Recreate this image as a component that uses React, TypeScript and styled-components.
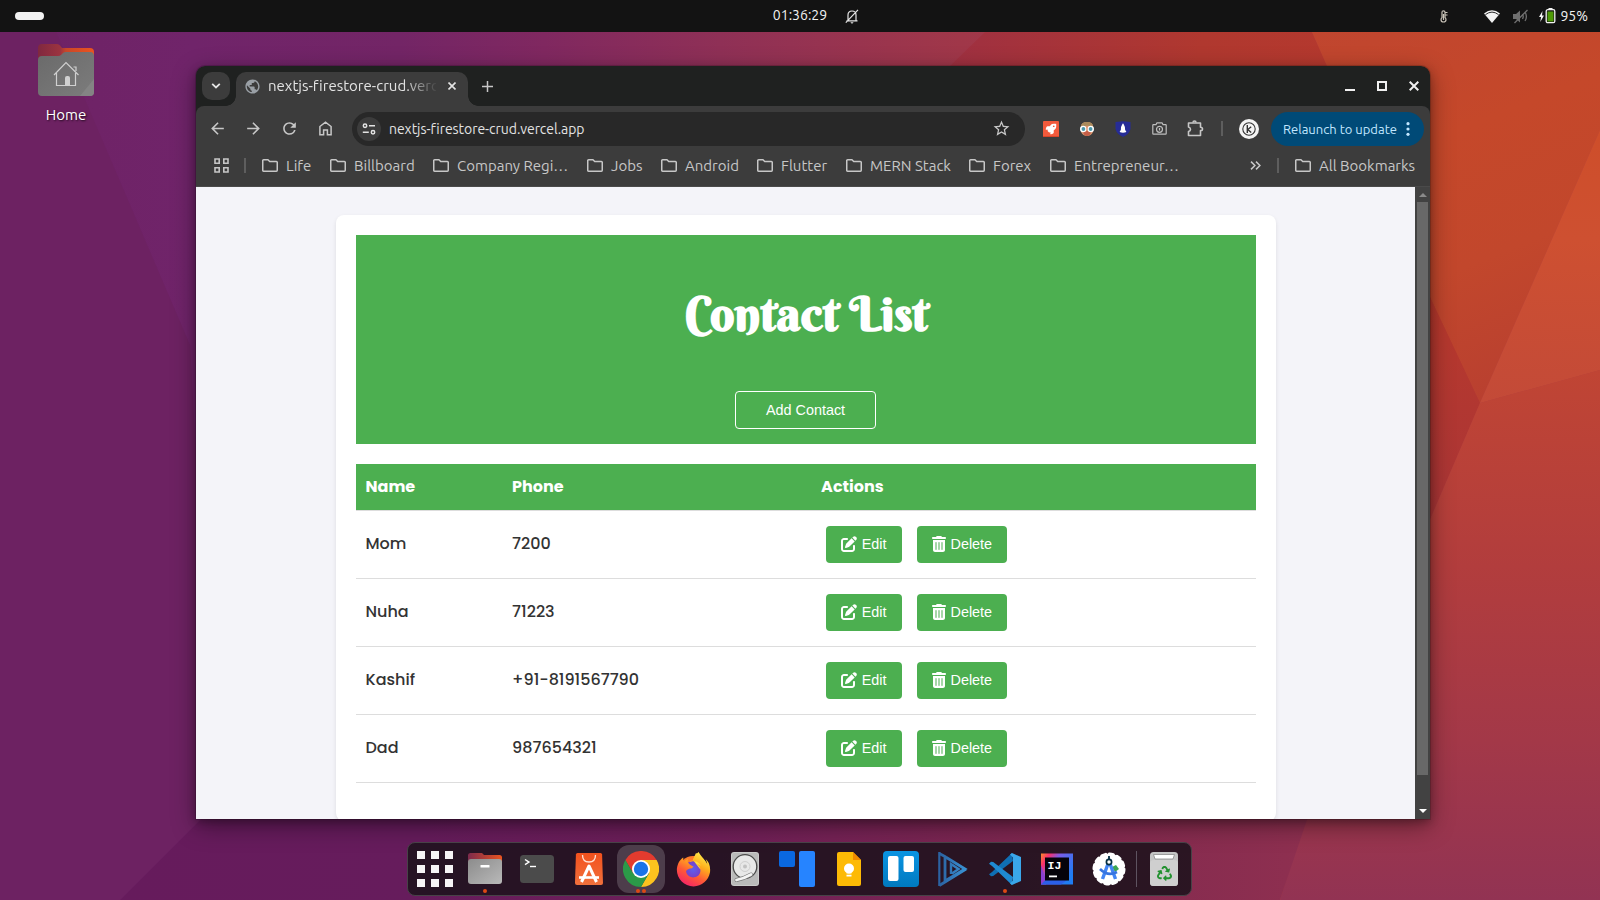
import React from 'react';
import styled, { createGlobalStyle, css } from 'styled-components';
import { FaPenToSquare, FaTrashCan } from 'react-icons/fa6';
import { FaFirefoxBrowser, FaRecycle, FaRocket } from 'react-icons/fa';
import { MdArrowBack, MdArrowForward, MdPublic, MdRefresh, MdStarBorder } from 'react-icons/md';

const GlobalStyle = createGlobalStyle`
  * { box-sizing: border-box; }
  body { margin: 0; overflow: hidden; }
  svg { display: block; flex: none; }
`;

const ui = '"Ubuntu", "Noto Sans", sans-serif';
const poppins = '"Poppins", "Inter", sans-serif';
const green = '#4caf50';

/* ---------- desktop ---------- */

const Desktop = styled.div`
  position: relative;
  display: flex;
  flex-direction: column;
  width: 1600px;
  height: 900px;
  overflow: hidden;
  background: #70246a;
  font-family: ${ui};
`;

const WallpaperSvg = styled.svg`
  position: absolute;
  inset: 0;
`;

const TopBar = styled.header`
  position: relative;
  display: grid;
  grid-template-columns: 1fr auto 1fr;
  align-items: center;
  height: 32px;
  padding: 0 12px 0 15px;
  background: #131313;
  color: #f2f2f2;
  font-size: 14px;
  line-height: 30px;
`;

const WorkspacePill = styled.div`
  width: 29px;
  height: 8px;
  border-radius: 4px;
  background: #f2f2f2;
`;

const Clock = styled.div`
  display: flex;
  align-items: center;
  gap: 18px;
  padding-left: 29px;
  height: 32px;
`;

const ClockTime = styled.span`
  padding-bottom: 2px;
`;

const StatusArea = styled.div`
  display: flex;
  align-items: center;
  justify-content: flex-end;
  height: 32px;
`;

const StatusIcon = styled.span<{ $after: number }>`
  margin-right: ${(p) => p.$after}px;
`;

const DesktopShortcut = styled.div`
  position: absolute;
  left: 26px;
  top: 43px;
  width: 80px;
  display: flex;
  flex-direction: column;
  align-items: center;
  gap: 8px;
  color: #fff;
  font-size: 15px;
  line-height: 20px;
  text-shadow: 1px 1px 2px rgba(0, 0, 0, 0.75);
`;

/* ---------- browser window ---------- */

const Window = styled.section`
  position: absolute;
  left: 196px;
  top: 66px;
  width: 1234px;
  height: 753px;
  display: flex;
  flex-direction: column;
  overflow: hidden;
  border-radius: 9px 9px 0 0;
  background: #1f2120;
`;

const WindowShadow = styled.div`
  position: absolute;
  left: 196px;
  top: 66px;
  width: 1234px;
  height: 753px;
  border-radius: 9px 9px 0 0;
  box-shadow: 0 0 0 1px rgba(0, 0, 0, 0.15), 0 3px 8px rgba(0, 0, 0, 0.25), 0 7px 24px rgba(0, 0, 0, 0.4);
`;

const TabStrip = styled.div`
  display: flex;
  align-items: flex-start;
  height: 40px;
  padding: 6px 11px 0 6px;
  color: #e3e3e3;
`;

const TabSearch = styled.div`
  display: grid;
  place-items: center;
  width: 28px;
  height: 28px;
  margin-right: 6px;
  border-radius: 10px;
  background: #3c3c3c;
`;

const Tab = styled.div`
  position: relative;
  display: flex;
  align-items: center;
  width: 232px;
  height: 34px;
  padding: 0 0 6px 8px;
  border-radius: 10px 10px 0 0;
  background: #3c3c3c;
  &::before,
  &::after {
    content: '';
    position: absolute;
    bottom: 0;
    width: 10px;
    height: 10px;
  }
  &::before {
    left: -10px;
    background: radial-gradient(circle at 0 0, transparent 9.5px, #3c3c3c 10px);
  }
  &::after {
    right: -10px;
    background: radial-gradient(circle at 100% 0, transparent 9.5px, #3c3c3c 10px);
  }
`;

const TabTitle = styled.span`
  width: 168px;
  margin: 0 12px 0 7px;
  overflow: hidden;
  white-space: nowrap;
  font-size: 15px;
  font-variant-ligatures: none;
  line-height: 24px;
  mask-image: linear-gradient(to right, #000 136px, transparent 170px);
`;

const NewTab = styled.div`
  display: grid;
  place-items: center;
  width: 20px;
  height: 28px;
  margin-left: 9.5px;
`;

const WindowControls = styled.div`
  display: flex;
  align-items: center;
  gap: 22px;
  height: 28px;
  margin-left: auto;
`;

const Toolbar = styled.div`
  display: flex;
  align-items: center;
  height: 44px;
  padding: 1px 6px 0 12px;
  border-radius: 8px 8px 0 0;
  background: #3c3c3c;
  color: #c7c7c7;
`;

const NavSlot = styled.div`
  display: grid;
  place-items: center;
  width: 36px;
  height: 34px;
`;

const NavGroup = styled.div`
  display: flex;
  margin: 0 8.500px 0 -8.500px;
`;

const Omnibox = styled.div`
  display: flex;
  align-items: center;
  width: 673px;
  height: 34px;
  padding: 0 14px 0 5px;
  border-radius: 17px;
  background: #282828;
  color: #e3e3e3;
  font-size: 14px;
`;

const SiteInfo = styled.div`
  display: grid;
  place-items: center;
  width: 24px;
  height: 24px;
  margin-right: 8px;
  border-radius: 50%;
  background: #3c3c3c;
`;

const Url = styled.span`
  flex: 1;
  letter-spacing: -0.05px;
  line-height: 20px;
`;

const Extensions = styled.div`
  display: flex;
  flex: 1;
  align-items: center;
  margin-left: 8px;
`;

const Divider = styled.div<{ $h: number }>`
  width: 2px;
  height: ${(p) => p.$h}px;
  background: #5e5e5e;
`;

const Avatar = styled.div`
  display: grid;
  place-items: center;
  width: 20px;
  height: 20px;
  margin: 0 12px 0 auto;
  border-radius: 50%;
  background: #f4f4f4;
`;

const RelaunchButton = styled.div`
  display: flex;
  align-items: center;
  justify-content: space-between;
  width: 153px;
  height: 34px;
  padding: 0 14px 0 12px;
  border-radius: 17px;
  background: #004a77;
  color: #c2e7ff;
  font-size: 13px;
`;

const BookmarksBar = styled.div`
  display: flex;
  align-items: center;
  height: 37px;
  padding: 0 15px 5px 18px;
  border-bottom: 1px solid #4a4a4a;
  background: #3c3c3c;
  color: #c7c7c7;
  font-size: 15px;
  line-height: 20px;
`;

const Bookmark = styled.div<{ $w: number }>`
  display: flex;
  align-items: center;
  gap: 8px;
  width: ${(p) => p.$w}px;
  white-space: nowrap;
`;

const BookmarkList = styled.div`
  display: flex;
  flex: 1;
  margin-left: 16px;
`;

const BookmarksEnd = styled.div`
  display: flex;
  align-items: center;
  gap: 16px;
`;

const Spacer = styled.div<{ $w: number }>`
  width: ${(p) => p.$w}px;
`;

const Viewport = styled.div`
  display: flex;
  flex: 1;
  min-height: 0;
`;

const Page = styled.main`
  display: flex;
  justify-content: center;
  align-items: flex-start;
  width: 1219px;
  height: 100%;
  padding-top: 28px;
  overflow: hidden;
  background: #f4f4f9;
  font-family: ${poppins};
  color: #333;
`;

const Scrollbar = styled.div`
  display: flex;
  flex-direction: column;
  align-items: center;
  justify-content: space-between;
  width: 15px;
  padding: 6px 0;
  background: #424242;
`;

const ScrollThumb = styled.div`
  width: 11px;
  height: 573px;
  margin: 5px 0 auto;
  background: #686868;
`;

/* ---------- contact page ---------- */

const Card = styled.div`
  width: 940px;
  height: 606px;
  padding: 20px;
  border-radius: 8px;
  background: #fff;
  box-shadow: 0 2px 4px rgba(0, 0, 0, 0.1);
`;

const Hero = styled.div`
  display: flex;
  flex-direction: column;
  align-items: center;
  justify-content: space-between;
  height: 209px;
  margin-bottom: 20px;
  padding: 49px 0 15px;
  background: ${green};
  color: #fff;
`;

const Title = styled.h1`
  margin: 0;
  padding-left: 2px;
  font: 700 48px/60px 'Berkshire Swash', 'Liberation Serif', serif;
`;

const buttonBase = css`
  border-radius: 4px;
  background: ${green};
  color: #fff;
  font: 400 14.4px/17px 'Liberation Sans', Arial, sans-serif;
`;

const AddButton = styled.button`
  ${buttonBase}
  width: 141px;
  height: 38px;
  padding: 0;
  border: 1px solid #fff;
`;

const ActionButton = styled.button<{ $icon: number }>`
  ${buttonBase}
  display: inline-flex;
  align-items: center;
  gap: 5px;
  height: 37px;
  padding: 0 15px;
  border: 0;
  svg {
    width: ${(p) => p.$icon}px;
    height: 16px;
  }
`;

const Actions = styled.div`
  display: flex;
  gap: 15px;
  padding: 1px 0 0 4.600px;
`;

const Table = styled.table`
  width: 100%;
  table-layout: fixed;
  border-collapse: separate;
  border-spacing: 0;
  font-size: 16px;
  line-height: 24px;
`;

const HeadCell = styled.th<{ $w?: number }>`
  width: ${(p) => (p.$w ? p.$w + 'px' : 'auto')};
  height: 47px;
  padding: 0 10px;
  border-bottom: 1px solid #ddd;
  background: ${green};
  color: #fff;
  font-weight: 700;
  text-align: left;
`;

const Cell = styled.td`
  height: 68px;
  padding: 0 10px 2px;
  border-bottom: 1px solid #ddd;
  font-weight: 500;
`;

/* ---------- dock ---------- */

const Dock = styled.nav`
  position: absolute;
  left: 407px;
  top: 842px;
  display: flex;
  align-items: center;
  width: 785px;
  height: 54px;
  border: 1px solid #474247;
  border-radius: 8px;
  background: rgba(30, 18, 28, 0.88);
`;

const DockSlot = styled.div<{ $w?: number; $nudge?: number }>`
  position: relative;
  display: grid;
  flex: none;
  place-items: center;
  width: ${(p) => p.$w ?? 52}px;
  height: 52px;
  padding-left: ${(p) => p.$nudge ?? 0}px;
`;

const ActiveTile = styled.div`
  display: grid;
  place-items: center;
  width: 48px;
  height: 48px;
  border-radius: 12px;
  background: rgba(255, 255, 255, 0.18);
`;

const RunningDots = styled.div`
  position: absolute;
  left: 0;
  right: 0;
  bottom: 2px;
  display: flex;
  justify-content: center;
  gap: 2px;
`;

const Dot = styled.i`
  width: 4px;
  height: 4px;
  border-radius: 50%;
  background: #dd4814;
`;

const DockDivider = styled.div`
  flex: none;
  width: 1px;
  height: 36px;
  margin-left: 1px;
  background: #5e5360;
`;

const AppGrid = styled.div`
  display: grid;
  grid-template-columns: repeat(3, 8px);
  grid-auto-rows: 8px;
  gap: 6px;
`;

const GridSquare = styled.i`
  background: #f6f4f6;
`;

const FirefoxBox = styled.div`
  display: grid;
  place-items: center;
  width: 36px;
  height: 36px;
  & > * { grid-area: 1 / 1; }
  & > svg:last-child path { fill: url(#ffBody); }
`;

const TrashBox = styled.div`
  display: grid;
  place-items: center;
  color: #22912f;
  & > * { grid-area: 1 / 1; }
  & > svg:last-child { margin-top: 8px; }
`;

/* ---------- drawings ---------- */

const Wallpaper = () => (
  <WallpaperSvg width="1600" height="900" viewBox="0 0 1600 900">
    <defs>
      <linearGradient id="wTop" gradientUnits="userSpaceOnUse" x1="0" y1="0" x2="1600" y2="0">
        <stop offset="0" stopColor="#6e2264" />
        <stop offset="0.12" stopColor="#70246a" />
        <stop offset="0.25" stopColor="#732566" />
        <stop offset="0.34" stopColor="#802860" />
        <stop offset="0.45" stopColor="#8f3056" />
        <stop offset="0.6" stopColor="#a03749" />
        <stop offset="1" stopColor="#b5403a" />
      </linearGradient>
      <linearGradient id="wRed" gradientUnits="userSpaceOnUse" x1="960" y1="0" x2="1440" y2="100">
        <stop offset="0" stopColor="#9f3041" />
        <stop offset="0.5" stopColor="#b0382f" />
        <stop offset="1" stopColor="#b8392d" />
      </linearGradient>
      <linearGradient id="wOrange" gradientUnits="userSpaceOnUse" x1="1320" y1="0" x2="1480" y2="400">
        <stop offset="0" stopColor="#bf4530" />
        <stop offset="0.4" stopColor="#c5482a" />
        <stop offset="0.7" stopColor="#c2472c" />
        <stop offset="1" stopColor="#b94030" />
      </linearGradient>
      <linearGradient id="wBright" x1="0" y1="0" x2="0" y2="1">
        <stop offset="0" stopColor="#ce4e2a" />
        <stop offset="0.4" stopColor="#ce5031" />
        <stop offset="1" stopColor="#c34a38" />
      </linearGradient>
      <linearGradient id="wDark" x1="0" y1="0" x2="0" y2="1">
        <stop offset="0" stopColor="#b9392b" />
        <stop offset="1" stopColor="#a93538" />
      </linearGradient>
      <linearGradient id="wLow" gradientUnits="userSpaceOnUse" x1="0" y1="370" x2="0" y2="900">
        <stop offset="0" stopColor="#c04534" />
        <stop offset="0.37" stopColor="#b23d3d" />
        <stop offset="0.7" stopColor="#a33848" />
        <stop offset="1" stopColor="#923353" />
      </linearGradient>
      <linearGradient id="wBottom" gradientUnits="userSpaceOnUse" x1="120" y1="0" x2="1320" y2="0">
        <stop offset="0" stopColor="#661b5c" />
        <stop offset="0.25" stopColor="#661c5c" />
        <stop offset="0.5" stopColor="#6f1f58" />
        <stop offset="0.8" stopColor="#82294f" />
        <stop offset="1" stopColor="#8f3050" />
      </linearGradient>
    </defs>
    <rect width="1600" height="900" fill="url(#wTop)" />
    <path d="M56 32L190 345L215 805L120 900H0V32Z" fill="#6d2262" />
    <path d="M950 66L985 32H1312L1480 403L1300 800H950Z" fill="url(#wRed)" />
    <path d="M1312 32H1600V130L1480 403L1430 297L1327 66Z" fill="url(#wOrange)" />
    <path d="M1600 130V370L1480 403Z" fill="url(#wBright)" />
    <path d="M1420 276L1480 403L1420 543Z" fill="url(#wDark)" />
    <path d="M1480 403L1600 370V900H1280L1315 790Z" fill="url(#wLow)" />
    <path d="M215 805H1312L1280 900H120Z" fill="url(#wBottom)" />
  </WallpaperSvg>
);

const FolderOutline = () => (
  <svg width="16" height="13" viewBox="0 0 16 13" fill="none" stroke="#c7c7c7" strokeWidth="1.5" strokeLinejoin="round">
    <path d="M.75 1.6q0-.85.85-.85H6L7.7 2.5h6.7q.85 0 .85.85v8q0 .9-.85.9H1.6q-.85 0-.85-.9z" />
  </svg>
);

const HomeFolder = () => (
  <svg width="56" height="54" viewBox="0 0 56 54">
    <defs>
      <linearGradient id="hfBack" x1="0" x2="1" y1="0" y2="0">
        <stop offset="0" stopColor="#80283f" />
        <stop offset="0.4" stopColor="#9c3440" />
        <stop offset="0.5" stopColor="#c94729" />
        <stop offset="1" stopColor="#ea5420" />
      </linearGradient>
      <linearGradient id="hfFront" x1="0" x2="1" y1="0" y2="1">
        <stop offset="0" stopColor="#6a6a6a" />
        <stop offset="1" stopColor="#7c7c7c" />
      </linearGradient>
    </defs>
    <path d="M0 5q0-4 4-4h15q2 0 3 1.500l2 2.500h28q4 0 4 4v20H0z" fill="url(#hfBack)" />
    <path d="M0 17q0-4 4-4h16q2 0 3-1l2-2q1-1 3-1h24q4 0 4 4v36q0 4-4 4H4q-4 0-4-4z" fill="url(#hfFront)" />
    <path d="M42 53L56 36v13q0 4-4 4z" fill="#848484" />
    <g fill="none" stroke="#d0d0d0" strokeWidth="1.200">
      <path d="M16 32L28 19.500 40.500 32M18.500 30v12.500h19V30M35.500 24h2.500v4" />
    </g>
    <path d="M27 43V35q0-2 2-2h1q2 0 2 2v8z" fill="#d0d0d0" />
  </svg>
);

const FilesIcon = () => (
  <svg width="34" height="34" viewBox="0 0 34 34">
    <defs>
      <linearGradient id="fBack" x1="0" x2="1">
        <stop offset="0" stopColor="#7c2a4c" />
        <stop offset="1" stopColor="#ea5420" />
      </linearGradient>
      <linearGradient id="fFront" x1="0" x2="1" y1="0" y2="1">
        <stop offset="0" stopColor="#8c8c8c" />
        <stop offset="1" stopColor="#b9b9b9" />
      </linearGradient>
    </defs>
    <path d="M0 3.500Q0 1 2.500 1H14l2 2h15.500Q34 3 34 5.500V20H0z" fill="url(#fBack)" />
    <rect y="7" width="34" height="25" rx="3" fill="url(#fFront)" />
    <rect x="12.500" y="13" width="9" height="2.500" rx=".6" fill="#fff" />
  </svg>
);

const TerminalIcon = () => (
  <svg width="34" height="30" viewBox="0 0 34 30">
    <rect y="1" width="34" height="28" rx="3.500" fill="#4b4b4b" />
    <path d="M5 5.500l4 2.600-4 2.600" fill="none" stroke="#fff" strokeWidth="1.400" />
    <path d="M10 12.500h6" stroke="#fff" strokeWidth="1.400" />
  </svg>
);

const AppCenterIcon = () => (
  <svg width="28" height="34" viewBox="0 0 28 34">
    <defs>
      <linearGradient id="acBag" x1="0" x2="0" y1="0" y2="1">
        <stop offset="0" stopColor="#f4511d" />
        <stop offset="1" stopColor="#f0703c" />
      </linearGradient>
    </defs>
    <path d="M2.500 1h23q1.500 0 1.600 1.500L28 31q0 2-2 2H2q-2 0-2-2L.9 2.500Q1 1 2.500 1z" fill="url(#acBag)" />
    <path d="M7.500 3q0 7 6.500 7t6.500-7" fill="none" stroke="#ffe2d6" strokeWidth="1.300" />
    <path d="M6.500 30L14 14l7.500 16" fill="none" stroke="#fff" strokeWidth="3" strokeLinejoin="round" />
    <path d="M4 25.500h20" stroke="#fff" strokeWidth="2.600" />
  </svg>
);

const ChromeIcon = () => (
  <svg width="36" height="36" viewBox="0 0 48 48">
    <path d="M24 12H44.800A24 24 0 0 0 3.200 12L13.600 30z" fill="#e33b2e" />
    <path d="M24 12H44.800A24 24 0 0 1 24 48L34.400 30z" fill="#fcc31e" />
    <path d="M13.600 30L3.200 12A24 24 0 0 0 24 48L34.400 30z" fill="#2b9a48" />
    <circle cx="24" cy="24" r="12" fill="#fff" />
    <circle cx="24" cy="24" r="9.600" fill="#1a73e8" />
  </svg>
);

const FirefoxIcon = () => (
  <FirefoxBox>
    <svg width="36" height="36" viewBox="0 0 36 36">
      <defs>
        <linearGradient id="ffBody" x1="0.8" x2="0.25" y1="0" y2="1">
          <stop offset="0" stopColor="#fff44f" />
          <stop offset="0.35" stopColor="#ffae1c" />
          <stop offset="0.65" stopColor="#ff5a36" />
          <stop offset="1" stopColor="#f31f6b" />
        </linearGradient>
        <radialGradient id="ffGlobe">
          <stop offset="0" stopColor="#5b5ff0" />
          <stop offset="1" stopColor="#7a3fc4" />
        </radialGradient>
      </defs>
      <circle cx="18" cy="19" r="14" fill="#ff7a2a" />
      <circle cx="18" cy="18.500" r="8.500" fill="url(#ffGlobe)" />
      <path d="M21 2q9 5 12 14l-8 2-7-9z" fill="#ffdc3e" />
    </svg>
    <FaFirefoxBrowser size={35} />
  </FirefoxBox>
);

const DisksIcon = () => (
  <svg width="28" height="34" viewBox="0 0 28 34">
    <rect width="28" height="34" rx="3" fill="#cacaca" />
    <rect x="1" y="1" width="26" height="32" rx="2" fill="#bababa" />
    <circle cx="14" cy="14.500" r="11.800" fill="#e8e8e8" stroke="#4a4a4a" strokeWidth="1.300" />
    <circle cx="14" cy="14.500" r="5" fill="none" stroke="#cfcfcf" />
    <circle cx="14" cy="14.500" r="2" fill="#c2c2c2" />
    <path d="M5.500 28Q13 26.500 20 22.500" fill="none" stroke="#777" strokeWidth="4" strokeLinecap="round" />
    <path d="M5.500 28Q13 26.500 20 22.500" fill="none" stroke="#f4f4f4" strokeWidth="2.800" strokeLinecap="round" />
  </svg>
);

const BlocksIcon = () => (
  <svg width="36" height="36" viewBox="0 0 36 36">
    <rect width="16" height="16" rx="2" fill="#0a68e0" />
    <rect x="20" width="16" height="36" rx="2" fill="#2684ff" />
  </svg>
);

const KeepIcon = () => (
  <svg width="24" height="34" viewBox="0 0 24 34">
    <path d="M2 0h14l8 8v24q0 2-2 2H2q-2 0-2-2V2Q0 0 2 0z" fill="#fdba05" />
    <path d="M16 0l8 8h-8z" fill="#f08a00" />
    <circle cx="12" cy="16.500" r="5" fill="#fff" />
    <rect x="9.500" y="18" width="5" height="3.500" fill="#fff" />
    <rect x="9.500" y="22.700" width="5" height="1.800" fill="#fff" />
  </svg>
);

const TrelloIcon = () => (
  <svg width="36" height="36" viewBox="0 0 36 36">
    <defs>
      <linearGradient id="tr" x1="0" x2="0" y1="0" y2="1">
        <stop offset="0" stopColor="#0a94e2" />
        <stop offset="1" stopColor="#0079bf" />
      </linearGradient>
    </defs>
    <rect width="36" height="36" rx="4" fill="url(#tr)" />
    <rect x="5" y="5" width="10.500" height="25" rx="2" fill="#fff" />
    <rect x="20.500" y="5" width="10.500" height="16" rx="2" fill="#fff" />
  </svg>
);

const PlayIcon = () => (
  <svg width="30" height="36" viewBox="0 0 30 36">
    <defs>
      <linearGradient id="pl" gradientUnits="userSpaceOnUse" x1="0" x2="30" y1="0" y2="0">
        <stop offset="0" stopColor="#2a5f9e" />
        <stop offset="1" stopColor="#3a96d8" />
      </linearGradient>
    </defs>
    <g fill="none" stroke="url(#pl)" strokeWidth="2.800">
      <path d="M1.300 1V35" strokeWidth="2.200" />
      <path d="M1.300 2.500L7 5.500V30L27 18 8 6.200M1.300 34.500L28 18" />
      <path d="M13 23V13L20.500 18 14 22.500" strokeWidth="2.400" />
    </g>
  </svg>
);

const CodeIcon = () => (
  <svg width="32" height="32" viewBox="0 0 32 32">
    <path d="M23 0L3 19 0 21.200l2 2L4.200 23 24 8z" fill="#0f6fb4" />
    <path d="M23 32L3 13 0 10.800l2-2L4.200 9 24 24z" fill="#1f8ad2" />
    <path d="M23 0l9 4v24l-9 4-2-1.500 3-3V4.500l-3-3z" fill="#3aa7ea" />
  </svg>
);

const IdeaIcon = () => (
  <svg width="32" height="32" viewBox="0 0 32 32">
    <defs>
      <linearGradient id="ij" x1="0" x2="1" y1="0" y2="0.6">
        <stop offset="0" stopColor="#fd8a2c" />
        <stop offset="0.2" stopColor="#fb2f6b" />
        <stop offset="0.45" stopColor="#7b5ce8" />
        <stop offset="1" stopColor="#1f7df2" />
      </linearGradient>
    </defs>
    <rect width="32" height="31" y=".5" fill="url(#ij)" />
    <path d="M0 12L5 27V31.500H0z" fill="#8a3fd0" />
    <path d="M0 31.500L5 26.500H27L20 31.500z" fill="#2b5fe8" />
    <rect x="4" y="4.500" width="24" height="23" fill="#05030a" />
    <text x="6.500" y="16" fill="#fff" fontFamily="Liberation Mono, monospace" fontWeight="700" fontSize="11.500">IJ</text>
    <rect x="8" y="22.500" width="8" height="1.800" fill="#fff" />
  </svg>
);

const StudioIcon = () => (
  <svg width="34" height="34" viewBox="0 0 34 34">
    <circle cx="17" cy="17" r="15.600" fill="#fff" />
    <circle cx="17" cy="17" r="15" fill="none" stroke="#fff" strokeWidth="3" strokeDasharray="4 3.850" strokeLinecap="round" />
    <path d="M20 15l4-2 3 4-4 3z" fill="#3ba653" />
    <path d="M10.500 27L17 9l6.500 18" fill="none" stroke="#4285f4" strokeWidth="3.400" />
    <path d="M8 17q8 8 17 3" fill="none" stroke="#3674e0" strokeWidth="2.600" />
    <circle cx="17" cy="10" r="2.600" fill="#fff" stroke="#073042" strokeWidth="1.700" />
    <path d="M17 4v4" stroke="#073042" strokeWidth="1.800" />
  </svg>
);

const TrashIcon = () => (
  <TrashBox>
    <svg width="28" height="34" viewBox="0 0 28 34">
      <rect width="28" height="34" rx="3.500" fill="#c4c4c4" />
      <rect y="8" width="28" height="26" rx="3.500" fill="#cfcfcf" />
      <path d="M3.500 2.500h21L23 7H5z" fill="#fff" stroke="#8c8c8c" strokeWidth=".8" />
    </svg>
    <FaRecycle size={15} />
  </TrashBox>
);

/* ---------- data ---------- */

const apps: { icon: React.ReactNode; dots?: number; active?: boolean }[] = [
  { icon: <TerminalIcon /> },
  { icon: <AppCenterIcon /> },
  { icon: <ChromeIcon />, dots: 2, active: true },
  { icon: <FirefoxIcon /> },
  { icon: <DisksIcon /> },
  { icon: <BlocksIcon /> },
  { icon: <KeepIcon /> },
  { icon: <TrelloIcon /> },
  { icon: <PlayIcon /> },
  { icon: <CodeIcon />, dots: 1 },
  { icon: <IdeaIcon /> },
  { icon: <StudioIcon /> },
];

const bookmarks: [string, number][] = [
  ['Life', 68], ['Billboard', 103], ['Company Regi…', 154], ['Jobs', 74], ['Android', 96],
  ['Flutter', 89], ['MERN Stack', 123], ['Forex', 81], ['Entrepreneur…', 130],
];

const contacts: [string, string][] = [
  ['Mom', '7200'], ['Nuha', '71223'], ['Kashif', '+91-8191567790'], ['Dad', '987654321'],
];

/* ---------- sections ---------- */

const SystemBar = () => (
  <TopBar>
    <WorkspacePill />
    <Clock>
      <ClockTime>01:36:29</ClockTime>
      <svg width="14" height="15" viewBox="0 0 14 15" fill="none" stroke="#e6e6e6" strokeWidth="1.200">
        <path d="M3 11.500V6q0-4 4-4t4 4v5.500M1.500 11.800h11M13 .8L.8 13.600" />
        <path d="M5.500 13.300h3q-.4 1.200-1.500 1.200t-1.500-1.200z" fill="#e6e6e6" stroke="none" />
      </svg>
    </Clock>
    <StatusArea>
      <StatusIcon $after={36}>
        <svg width="8" height="13" viewBox="0 0 8 13" fill="none" stroke="#c9c3b8" strokeWidth="1.200">
          <path d="M2 7.500V2.300q0-1.500 1.500-1.500T5 2.300v5.200q1 .8 1 2.300 0 2.200-2.500 2.200T1 9.800q0-1.500 1-2.300zM3.500 4v6M5.500 2.500h2M5.500 5h2" />
        </svg>
      </StatusIcon>
      <StatusIcon $after={13}>
        <svg width="16" height="13" viewBox="0 0 16 13">
          <path d="M0 3.400Q8-2.800 16 3.400L8 13z" fill="#f2f2f2" />
          <path d="M1.400 4.700Q8-.5 14.600 4.700" fill="none" stroke="#131313" strokeWidth=".9" />
        </svg>
      </StatusIcon>
      <StatusIcon $after={10}>
        <svg width="16" height="15" viewBox="0 0 16 15" fill="none" stroke="#6f6f6f" strokeWidth="1.300">
          <path d="M0 5h3l4-3.500v12L3 10H0z" fill="#6f6f6f" stroke="none" />
          <path d="M9.500 5q1.500 2.500 0 5M12 3q2.800 4.500 0 9M14.500 1L1.500 14" />
        </svg>
      </StatusIcon>
      <StatusIcon $after={4}>
        <svg width="17" height="16" viewBox="0 0 17 16">
          <path d="M3.500 3L0 9h2l-.7 5L5 7.500H3z" fill="#f2f2f2" />
          <rect x="9.500" y="0" width="4" height="2" fill="#f2f2f2" />
          <rect x="7.200" y="1.700" width="8.600" height="13" rx="1.500" fill="#131313" stroke="#f2f2f2" strokeWidth="1.300" />
          <rect x="8.500" y="3.500" width="6" height="10" fill="#4e9a06" />
        </svg>
      </StatusIcon>
      95%
    </StatusArea>
  </TopBar>
);

const BrowserTabs = () => (
  <TabStrip>
    <TabSearch>
      <svg width="10" height="6" viewBox="0 0 10 6" fill="none" stroke="#e3e3e3" strokeWidth="1.800"><path d="M1.200.8L5 4.500 8.800.8" /></svg>
    </TabSearch>
    <Tab>
      <MdPublic size={17} color="#9aa0a6" />
      <TabTitle>nextjs-firestore-crud.vercel.app</TabTitle>
      <svg width="8" height="8" viewBox="0 0 8 8" stroke="#e3e3e3" strokeWidth="1.600"><path d="M.5.5l7 7M7.500.5l-7 7" /></svg>
    </Tab>
    <NewTab>
      <svg width="11" height="11" viewBox="0 0 11 11" stroke="#c7c7c7" strokeWidth="1.500"><path d="M5.500 0v11M0 5.500h11" /></svg>
    </NewTab>
    <WindowControls>
      <svg width="10" height="10" viewBox="0 0 10 10"><path d="M0 8h10v2H0z" fill="#f0f0f0" /></svg>
      <svg width="10" height="10" viewBox="0 0 10 10"><path d="M1 1h8v8H1z" fill="none" stroke="#f0f0f0" strokeWidth="2" /></svg>
      <svg width="10" height="10" viewBox="0 0 10 10" stroke="#f0f0f0" strokeWidth="2"><path d="M.7.7l8.600 8.600M9.300.7L.7 9.300" /></svg>
    </WindowControls>
  </TabStrip>
);

const Nav = () => (
  <NavGroup>
    <NavSlot><MdArrowBack size={19} /></NavSlot>
    <NavSlot><MdArrowForward size={19} /></NavSlot>
    <NavSlot><MdRefresh size={19} /></NavSlot>
    <NavSlot>
      <svg width="13" height="15" viewBox="0 0 13 15" fill="none" stroke="#c7c7c7" strokeWidth="1.500">
        <path d="M.9 5.500L6.500 1.200 12.100 5.500V13.800H8.400V9H4.600v4.800H.9z" />
      </svg>
    </NavSlot>
  </NavGroup>
);

const BrowserToolbar = () => (
  <Toolbar>
    <Nav />
    <Omnibox>
      <SiteInfo>
        <svg width="14" height="12" viewBox="0 0 14 12" fill="none" stroke="#e3e3e3" strokeWidth="1.500">
          <circle cx="3" cy="2.700" r="1.700" /><path d="M7 2.700h6M.8 9.300h6" /><circle cx="11" cy="9.300" r="1.700" />
        </svg>
      </SiteInfo>
      <Url>nextjs-firestore-crud.vercel.app</Url>
      <MdStarBorder size={19} color="#c7c7c7" />
    </Omnibox>
    <Extensions>
      <NavSlot>
        <svg width="16" height="16" viewBox="0 0 16 16">
          <rect width="16" height="16" rx="1" fill="#f25a3c" /><rect y="15" width="16" height="1" fill="#d8452a" />
          <FaRocket x="2.500" y="2.500" size={11} color="#fff" />
        </svg>
      </NavSlot>
      <NavSlot>
        <svg width="16" height="16" viewBox="0 0 16 16">
          <path d="M2 6Q2 1 8 1t6 5v5q-2 4-6 4t-6-4z" fill="#d9946c" />
          <path d="M2 6Q2 1 8 1t6 5q-6-2.500-12 0z" fill="#a98a5c" />
          <path d="M4 11q4-2 8 0-1 4-4 4t-4-4z" fill="#c65f48" />
          <circle cx="4.200" cy="8" r="3.200" fill="#fff" /><circle cx="11.800" cy="8" r="3.200" fill="#fff" />
          <circle cx="4.400" cy="8" r="1.900" fill="#4a97ab" /><circle cx="11.600" cy="8" r="1.900" fill="#4a97ab" />
        </svg>
      </NavSlot>
      <NavSlot>
        <svg width="16" height="16" viewBox="0 0 16 16">
          <path d="M.5 1L8 .3l7.500.7v7q-1.500 5.500-7.500 8-6-2.500-7.500-8z" fill="#262c96" />
          <path d="M8 2.300l.8 1.200q1.500 2.200 1.300 5.200l1.300 2.300q-3.400 1.400-6.800 0L5.900 8.700Q5.700 5.500 7.200 3.500z" fill="#fff" />
        </svg>
      </NavSlot>
      <NavSlot>
        <svg width="15" height="13" viewBox="0 0 15 13" fill="none" stroke="#bdbdbd" strokeWidth="1.200">
          <path d="M.8 3.200q0-.6.600-.6h2.600L5 .8h5l1 1.800h2.600q.6 0 .6.600v8.300q0 .7-.6.700H1.400q-.6 0-.6-.7z" />
          <circle cx="7.500" cy="7.300" r="3" /><path d="M7.500 6v2.600" />
        </svg>
      </NavSlot>
      <NavSlot>
        <svg width="17" height="17" viewBox="0 0 17 17" fill="none" stroke="#c7c7c7" strokeWidth="1.600" strokeLinejoin="round">
          <path d="M1.500 3h12v4.200q2 0 2 1.700t-2 1.700V15.500h-12V11.500q2-.6 2-2.300t-2-2.300z" /><path d="M6 2.500q0-1.500 1.500-1.500T9 2.500" />
        </svg>
      </NavSlot>
      <Spacer $w={8} />
      <Divider $h={15} />
      <Avatar>
        <svg width="16" height="16" viewBox="0 0 16 16" fill="none" stroke="#333" strokeWidth="1.100">
          <circle cx="8" cy="8" r="6.200" /><path d="M6.300 4v8M10.200 5.800L6.800 8.500l3.400 3" strokeWidth="1.400" />
        </svg>
      </Avatar>
      <RelaunchButton>
        Relaunch to update
        <svg width="4" height="14" viewBox="0 0 4 14" fill="#c2e7ff"><circle cx="2" cy="1.700" r="1.600" /><circle cx="2" cy="7" r="1.600" /><circle cx="2" cy="12.300" r="1.600" /></svg>
      </RelaunchButton>
    </Extensions>
  </Toolbar>
);

const Bookmarks = () => (
  <BookmarksBar>
    <svg width="15" height="15" viewBox="0 0 15 15" fill="none" stroke="#c7c7c7" strokeWidth="1.600">
      <path d="M1 1h4.200v4.200H1zM9.800 1H14v4.200H9.800zM1 9.800h4.200V14H1zM9.800 9.800H14V14H9.800z" />
    </svg>
    <Spacer $w={15} />
    <Divider $h={15} />
    <BookmarkList>
      {bookmarks.map(([name, w]) => (
        <Bookmark key={name} $w={w}><FolderOutline />{name}</Bookmark>
      ))}
    </BookmarkList>
    <BookmarksEnd>
      <svg width="11" height="9" viewBox="0 0 11 9" fill="none" stroke="#c7c7c7" strokeWidth="1.500"><path d="M1 .6l3.900 3.900L1 8.400M6 .6l3.900 3.900L6 8.400" /></svg>
      <Divider $h={15} />
      <Bookmark $w={120}><FolderOutline />All Bookmarks</Bookmark>
    </BookmarksEnd>
  </BookmarksBar>
);

const ContactPage = () => (
  <Page>
    <Card>
      <Hero>
        <Title>Contact List</Title>
        <AddButton>Add Contact</AddButton>
      </Hero>
      <Table>
        <thead>
          <tr>
            <HeadCell $w={146.6}>Name</HeadCell>
            <HeadCell $w={309}>Phone</HeadCell>
            <HeadCell>Actions</HeadCell>
          </tr>
        </thead>
        <tbody>
          {contacts.map(([name, phone]) => (
            <tr key={name}>
              <Cell>{name}</Cell>
              <Cell>{phone}</Cell>
              <Cell>
                <Actions>
                  <ActionButton $icon={16}><FaPenToSquare />Edit</ActionButton>
                  <ActionButton $icon={14}><FaTrashCan />Delete</ActionButton>
                </Actions>
              </Cell>
            </tr>
          ))}
        </tbody>
      </Table>
    </Card>
  </Page>
);

const DockBar = () => (
  <Dock>
    <DockSlot $w={51} $nudge={3}>
      <AppGrid>{Array.from({ length: 9 }, (_, i) => <GridSquare key={i} />)}</AppGrid>
    </DockSlot>
    <DockSlot><FilesIcon /><RunningDots><Dot /></RunningDots></DockSlot>
    {apps.map((app, i) => (
      <DockSlot key={i}>
        {app.active ? <ActiveTile>{app.icon}</ActiveTile> : app.icon}
        {app.dots && <RunningDots>{Array.from({ length: app.dots }, (_, d) => <Dot key={d} />)}</RunningDots>}
      </DockSlot>
    ))}
    <DockDivider />
    <DockSlot $w={54}><TrashIcon /></DockSlot>
  </Dock>
);

export default function App() {
  return (
    <Desktop>
      <GlobalStyle />
      <Wallpaper />
      <WindowShadow />
      <SystemBar />
      <DesktopShortcut><HomeFolder />Home</DesktopShortcut>
      <Window>
        <BrowserTabs />
        <BrowserToolbar />
        <Bookmarks />
        <Viewport>
          <ContactPage />
          <Scrollbar>
            <svg width="8" height="4" viewBox="0 0 8 4"><path d="M0 4l4-4 4 4z" fill="#8a8a8a" /></svg>
            <ScrollThumb />
            <svg width="8" height="4" viewBox="0 0 8 4"><path d="M0 0h8L4 4z" fill="#fff" /></svg>
          </Scrollbar>
        </Viewport>
      </Window>
      <DockBar />
    </Desktop>
  );
}
